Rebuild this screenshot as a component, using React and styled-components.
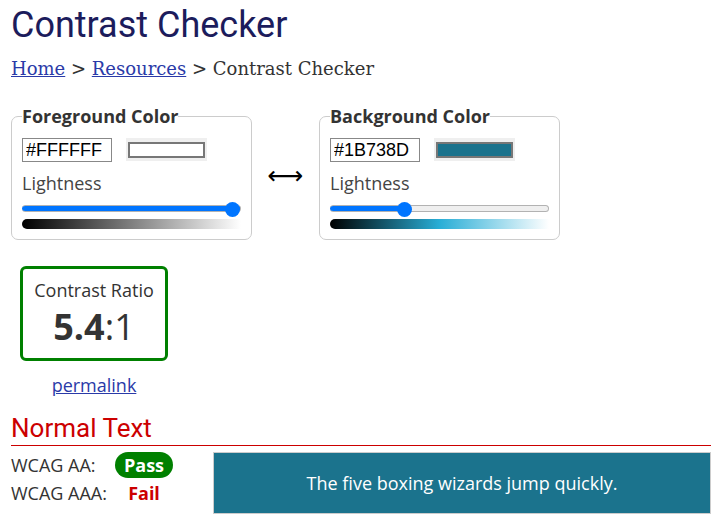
import styled, { createGlobalStyle } from 'styled-components';

const GlobalStyle = createGlobalStyle`
  body {
    margin: 0;
    background: #fff;
    font-family: "Open Sans", sans-serif;
    color: #333;
  }
`;

const Page = styled.div`
  padding: 0 13px 0 11px;
`;

const Title = styled.h1`
  margin: 0;
  padding-top: 4px;
  font-family: Roboto, sans-serif;
  font-weight: 400;
  font-size: 36px;
  line-height: 42px;
  color: #1c1c5c;
`;

const Crumbs = styled.nav`
  margin-top: 11px;
  font-family: "DejaVu Serif", serif;
  font-size: 18px;
  line-height: 24px;
  color: #333;

  a {
    color: #2a3aa8;
    text-decoration: underline;
  }
`;

const Pickers = styled.div`
  display: flex;
  align-items: center;
  margin-top: 23px;
`;

const Picker = styled.fieldset`
  margin: 0;
  width: 241px;
  box-sizing: border-box;
  padding: 0 10px 10px;
  border: 1px solid #ccc;
  border-radius: 7px;
`;

const Legend = styled.legend`
  padding: 0;
  font-weight: 700;
  font-size: 18px;
  line-height: 24px;
  color: #333;
`;

const InputRow = styled.div`
  display: flex;
  gap: 14px;
  margin-top: 10px;
`;

const HexInput = styled.input`
  box-sizing: border-box;
  width: 90px;
  height: 24px;
  padding: 0 3px;
  border: 1px solid #888;
  font-family: "Liberation Sans", Arial, sans-serif;
  font-size: 18px;
  color: #000;
  outline: none;
`;

const Swatch = styled.div`
  box-sizing: border-box;
  width: 81px;
  height: 23px;
  padding: 4px 2px 3px;
  background: #efefef;

  span {
    display: block;
    height: 100%;
    box-sizing: border-box;
    border: 2px solid #777;
    background: ${(p) => p.$color};
  }
`;

const Label = styled.div`
  margin-top: 9px;
  font-size: 18px;
  line-height: 24px;
  color: #444;
`;

const Slider = styled.input`
  -webkit-appearance: none;
  appearance: none;
  display: block;
  width: 219px;
  height: 16px;
  margin: 5px 0 0;
  background: transparent;

  &::-webkit-slider-runnable-track {
    height: 7px;
    border-radius: 4px;
    box-sizing: border-box;
    background: linear-gradient(
      to right,
      #0075ff 0,
      #0075ff var(--fill),
      #efefef var(--fill)
    );
    border: 1px solid #b2b2b2;
    border-left: none;
  }

  &::-webkit-slider-thumb {
    -webkit-appearance: none;
    width: 15px;
    height: 15px;
    margin-top: -4px;
    border-radius: 50%;
    background: #0075ff;
    border: none;
  }
`;

const Ramp = styled.div`
  width: 219px;
  height: 10px;
  margin-top: 3px;
  border-radius: 5px 0 0 5px;
  background: linear-gradient(
    to right,
    hsl(${(p) => p.$h}, ${(p) => p.$s}%, 0%),
    hsl(${(p) => p.$h}, ${(p) => p.$s}%, 50%),
    hsl(${(p) => p.$h}, ${(p) => p.$s}%, 100%)
  );
`;

const Swap = styled.div`
  width: 67px;
  text-align: center;
  font-family: "DejaVu Sans", sans-serif;
  font-size: 25px;
  color: #000;
  padding-top: 6px;
`;

const RatioWrap = styled.div`
  display: inline-flex;
  flex-direction: column;
  align-items: center;
  margin: 26px 0 0 9px;
`;

const RatioBox = styled.div`
  box-sizing: border-box;
  width: 148px;
  height: 95px;
  border: 3px solid #008000;
  border-radius: 6px;
  text-align: center;
  padding-top: 9px;
`;

const RatioLabel = styled.div`
  font-size: 18px;
  line-height: 24px;
  color: #333;
`;

const RatioValue = styled.div`
  margin-top: 3px;
  font-size: 36px;
  line-height: 44px;
  color: #333;

  b {
    font-weight: 700;
  }
`;

const Permalink = styled.a`
  margin-top: 12px;
  font-size: 18px;
  line-height: 24px;
  color: #2a3aa8;
  text-decoration: underline;
`;

const SectionTitle = styled.h2`
  margin: 16px 0 0;
  padding-bottom: 1px;
  border-bottom: 1px solid #c00;
  font-family: Roboto, sans-serif;
  font-weight: 400;
  font-size: 26px;
  line-height: 31px;
  color: #c00;
`;

const Results = styled.div`
  display: flex;
  align-items: flex-start;
  margin-top: 6px;
`;

const Checks = styled.div`
  display: grid;
  grid-template-columns: 104px 58px;
  row-gap: 2px;
  align-items: center;
  font-size: 18px;
`;

const CheckName = styled.div`
  line-height: 26px;
  color: #333;
`;

const Verdict = styled.div`
  justify-self: center;
  font-weight: 700;
  line-height: 26px;
  border-radius: 13px;
  padding: 0 ${(p) => (p.$pass ? '9px' : '0')};
  background: ${(p) => (p.$pass ? '#008000' : 'transparent')};
  color: ${(p) => (p.$pass ? '#fff' : '#c00')};
`;

const Sample = styled.div`
  flex: 1;
  margin-left: 40px;
  height: 62px;
  box-sizing: border-box;
  border: 1px solid #ccc;
  background: ${(p) => p.$bg};
  color: ${(p) => p.$fg};
  display: flex;
  align-items: center;
  justify-content: center;
  font-size: 18px;
`;

const colors = [
  { legend: 'Foreground Color', hex: '#FFFFFF', h: 0, s: 0, l: 100 },
  { legend: 'Background Color', hex: '#1B738D', h: 194, s: 68, l: 33 },
];

function ColorPicker({ c }) {
  return (
    <Picker>
      <Legend>{c.legend}</Legend>
      <InputRow>
        <HexInput defaultValue={c.hex} />
        <Swatch $color={c.hex}>
          <span />
        </Swatch>
      </InputRow>
      <Label>Lightness</Label>
      <Slider
        type="range"
        min="0"
        max="100"
        defaultValue={c.l}
        style={{ '--fill': `${c.l}%` }}
      />
      <Ramp $h={c.h} $s={c.s} />
    </Picker>
  );
}

export default function App() {
  return (
    <Page>
      <GlobalStyle />
      <Title>Contrast Checker</Title>
      <Crumbs>
        <a href="#">Home</a> &gt; <a href="#">Resources</a> &gt; Contrast Checker
      </Crumbs>
      <Pickers>
        <ColorPicker c={colors[0]} />
        <Swap>⟷</Swap>
        <ColorPicker c={colors[1]} />
      </Pickers>
      <RatioWrap>
        <RatioBox>
          <RatioLabel>Contrast Ratio</RatioLabel>
          <RatioValue>
            <b>5.4</b>:1
          </RatioValue>
        </RatioBox>
        <Permalink href="#">permalink</Permalink>
      </RatioWrap>
      <SectionTitle>Normal Text</SectionTitle>
      <Results>
        <Checks>
          <CheckName>WCAG AA:</CheckName>
          <Verdict $pass>Pass</Verdict>
          <CheckName>WCAG AAA:</CheckName>
          <Verdict>Fail</Verdict>
        </Checks>
        <Sample $bg="#1B738D" $fg="#FFFFFF">
          The five boxing wizards jump quickly.
        </Sample>
      </Results>
    </Page>
  );
}
